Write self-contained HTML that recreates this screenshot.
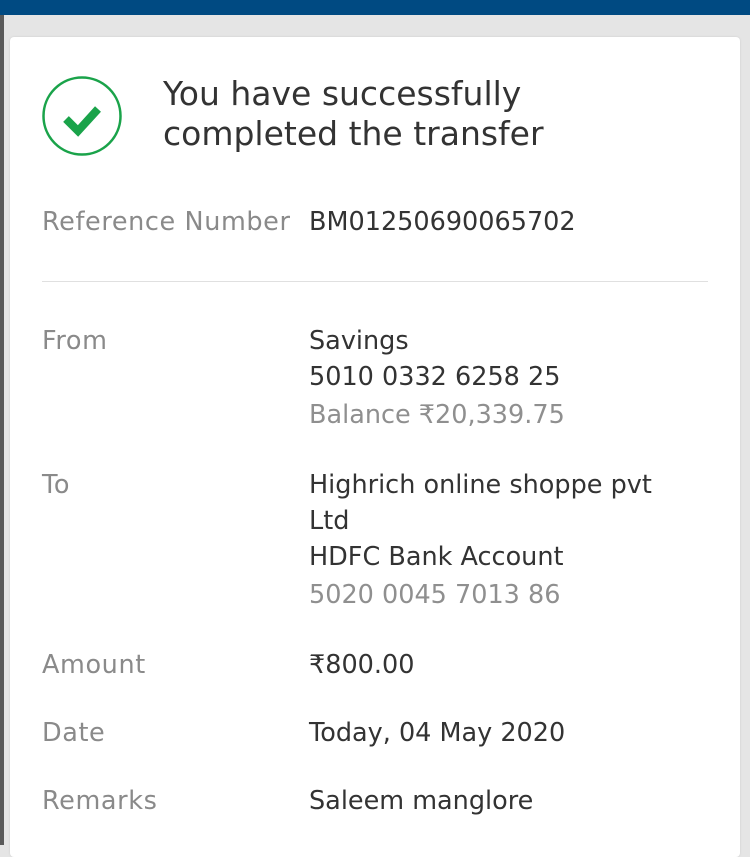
<!DOCTYPE html>
<html><head><meta charset="utf-8"><style>
body{margin:0;width:750px;height:845px;overflow:hidden;background:#e5e5e5;font-family:"DejaVu Sans",sans-serif;position:relative}
.top{position:absolute;left:0;top:0;width:750px;height:15px;background:#004a82}
.lstrip{position:absolute;left:0;top:15px;width:4px;height:830px;background:#5a5a5a}
.card{position:absolute;left:10px;top:37px;width:730px;height:820px;background:#fff;border-radius:4px;box-shadow:0 0 2px #ccc}
.t{position:absolute;font-size:25.5px;white-space:nowrap}
.l{color:#8a8a8a;left:42px;font-size:25.5px;letter-spacing:0.6px}
.v{color:#333;left:309px}
.g{color:#8f8f8f}
h1{position:absolute;left:163px;top:74px;margin:0;font-weight:normal;font-size:33px;line-height:40px;color:#333}
.hr{position:absolute;left:42px;top:281px;width:666px;height:1px;background:#e0e0e0}
</style></head><body>
<div class="top"></div><div class="lstrip"></div>
<div class="card"></div>
<svg style="position:absolute;left:42px;top:76px" width="80" height="80"><circle cx="40" cy="40" r="38.5" fill="none" stroke="#1aa34a" stroke-width="2.5"/><path d="M24 43 L36 55 L56 33" fill="none" stroke="#1aa34a" stroke-width="8"/></svg>
<h1>You have successfully<br>completed the transfer</h1>
<div class="t l" style="top:207px">Reference Number</div>
<div class="t v" style="top:207px">BM01250690065702</div>
<div class="hr"></div>
<div class="t l" style="top:326px">From</div>
<div class="t v" style="top:326px">Savings</div>
<div class="t v" style="top:362px">5010 0332 6258 25</div>
<div class="t v g" style="top:400px">Balance ₹20,339.75</div>
<div class="t l" style="top:470px">To</div>
<div class="t v" style="top:470px">Highrich online shoppe pvt</div>
<div class="t v" style="top:506px">Ltd</div>
<div class="t v" style="top:542px">HDFC Bank Account</div>
<div class="t v g" style="top:580px">5020 0045 7013 86</div>
<div class="t l" style="top:650px">Amount</div>
<div class="t v" style="top:650px">₹800.00</div>
<div class="t l" style="top:718px">Date</div>
<div class="t v" style="top:718px">Today, 04 May 2020</div>
<div class="t l" style="top:786px">Remarks</div>
<div class="t v" style="top:786px">Saleem manglore</div>
</body></html>
